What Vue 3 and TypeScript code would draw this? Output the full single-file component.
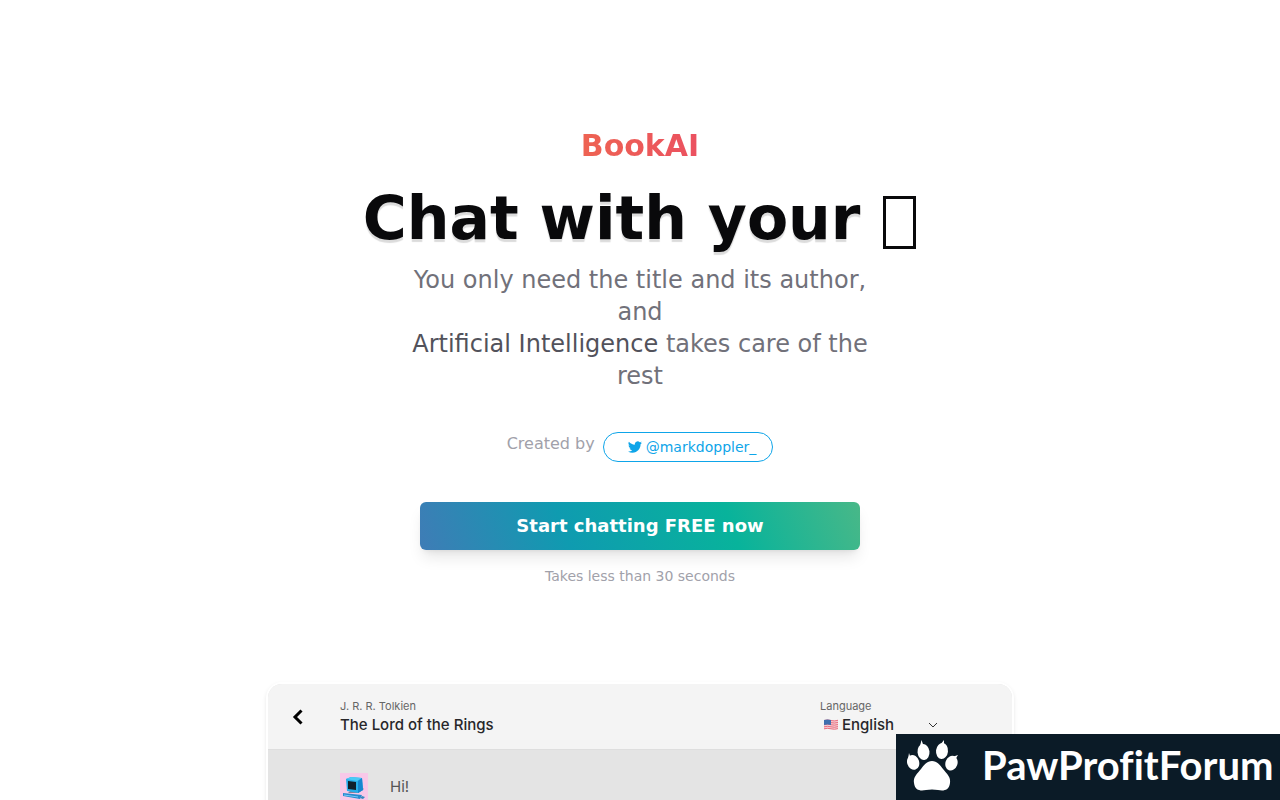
<script setup lang="ts">
import { ref } from 'vue'

const languages: string[] = ['English']
const language = ref<string>('English')
const book = { author: 'J. R. R. Tolkien', title: 'The Lord of the Rings' }
</script>

<template>
  <main class="page">
    <header class="hero">
      <p class="brand">BookAI</p>
      <h1 class="headline">Chat with your <span class="glyph" role="img" aria-label="books"></span></h1>
      <p class="lead">
        You only need the title and its author, and<br />
        <strong>Artificial Intelligence</strong> takes care of the rest
      </p>
      <div class="credit">
        <span>Created by</span>
        <a class="handle" href="#twitter">
          <svg viewBox="0 0 24 24" aria-hidden="true">
            <path d="M23.95 4.57a10 10 0 0 1-2.82.77 4.96 4.96 0 0 0 2.16-2.72c-.95.55-2 .95-3.13 1.18a4.92 4.92 0 0 0-8.38 4.48C7.69 8.1 4.07 6.13 1.64 3.16a4.92 4.92 0 0 0 1.52 6.57 4.9 4.9 0 0 1-2.23-.61v.06a4.92 4.92 0 0 0 3.95 4.83 5 5 0 0 1-2.21.08 4.94 4.94 0 0 0 4.6 3.42A9.87 9.87 0 0 1 0 19.54a13.99 13.99 0 0 0 7.55 2.21c9.05 0 14-7.5 14-13.98 0-.21 0-.42-.02-.63a9.94 9.94 0 0 0 2.46-2.55z" />
          </svg>
          @markdoppler_
        </a>
      </div>
      <button class="start" type="button">Start chatting FREE now</button>
      <p class="hint">Takes less than 30 seconds</p>
    </header>

    <section class="chat">
      <div class="bar">
        <button class="back" type="button" aria-label="Back">
          <svg viewBox="0 0 12 18" aria-hidden="true"><path d="M9.500 2.500 3 9l6.500 6.500" /></svg>
        </button>
        <div class="title">
          <p class="small">{{ book.author }}</p>
          <h2>{{ book.title }}</h2>
        </div>
        <div class="language">
          <label class="small" for="language">Language</label>
          <div class="picker">
            <svg class="flag" viewBox="0 0 14 11" aria-hidden="true">
              <path fill="#f6cdd4" d="M0 1q3.500-1 7 0t7-.2v9q-3.500 1-7 .2t-7 .2z" />
              <path fill="none" stroke="#e8707f" d="M0 1.500q3.500-1 7 0t7-.2M0 3.600q3.500-1 7 0t7-.2M0 5.700q3.500-1 7 0t7-.2M0 7.800q3.500-1 7 0t7-.2M0 9.800q3.500-1 7 0t7-.2" />
              <path fill="#3f6fae" d="M0 1q3.500-1 7 0v5q-3.500-1-7 0z" />
            </svg>
            <select id="language" v-model="language">
              <option v-for="name in languages" :key="name">{{ name }}</option>
            </select>
            <svg class="chevron" viewBox="0 0 10 6" aria-hidden="true"><path d="m1 1 4 4 4-4" /></svg>
          </div>
        </div>
      </div>
      <div class="messages">
        <svg class="avatar" viewBox="0 0 28 28" aria-hidden="true">
          <path fill="#f8c8e8" d="M0 0h28v28H0z" />
          <path fill="#8d7f96" d="m20 13 4 3-6 4H8l2-2z" />
          <path fill="#27aeea" d="m6 6 5-2 11 1 1 12-5 3-11-2z" />
          <path fill="#4bcaf6" d="m6 6 5-2 11 1-5 3z" />
          <path fill="#1687cf" d="m18 8 4-3 1 12-5 3z" />
          <path fill="#10202d" d="m8 8 8 1v8l-8-1z" />
          <path fill="#278bd0" d="m3 20 19 2-2 4-17-3z" />
          <path stroke="#75cafa" d="m4 22 14 2" />
          <path fill="#3489bd" d="m22 23 3 1-2 2-3-1z" />
        </svg>
        <p>Hi!</p>
      </div>
    </section>

    <aside class="banner">
      <svg class="paw" viewBox="0 0 52 51" aria-hidden="true">
        <path d="M26 21c5 0 8 4 11 8 4 5 8 8 7 14-1 8-7 8-12 7q-6-1-12 0c-5 1-11 1-12-7-1-6 3-9 7-14 3-4 6-8 11-8z" />
        <ellipse cx="17.500" cy="12" rx="6" ry="8" transform="rotate(-6 17 12)" />
        <ellipse cx="36" cy="11" rx="6" ry="8" transform="rotate(6 36 11)" />
        <ellipse cx="7" cy="22.500" rx="6" ry="7.500" transform="rotate(-18 7 22)" />
        <ellipse cx="45.500" cy="23" rx="6" ry="7.500" transform="rotate(20 45 23)" />
        <path d="m14 6 1.500-6L18 7zM34 5l4-5v7zM2 19l1-6 2 6zM46 17l6-2-3 5z" />
      </svg>
      <span>PawProfitForum</span>
    </aside>
  </main>
</template>

<style>
body {
  margin: 0;
  background: #fff;
}
html {
  scrollbar-width: none;
}
</style>

<style scoped>
.page {
  height: 100vh;
  overflow: hidden;
  font-family: "DejaVu Sans", sans-serif;
  color: #09090b;
}
.page p,
h1,
h2 {
  margin: 0;
}
.hero {
  display: flex;
  flex-direction: column;
  align-items: center;
  padding: 128px 24px 98px;
  text-align: center;
}
.brand {
  font-size: 30px;
  line-height: 36px;
  font-weight: 700;
  color: transparent;
  background: linear-gradient(90deg, #ee6352, #eb5160);
  background-clip: text;
}
.headline {
  padding-top: 24px;
  font-size: 60px;
  line-height: 60px;
  font-weight: 700;
  text-shadow: 0 3px 1px rgba(0, 0, 0, 0.14);
}
.glyph {
  display: inline-block;
  box-sizing: border-box;
  width: 33px;
  height: 53px;
  margin: 0 1px 0 2px;
  border: 3px solid #09090b;
  vertical-align: -10px;
}
.lead {
  width: 480px;
  max-width: 100%;
  padding-top: 15px;
  font-size: 24px;
  line-height: 32px;
  color: #71717a;
}
.lead strong {
  font-weight: 400;
  color: #52525b;
}
.credit {
  display: flex;
  gap: 8px;
  margin-top: 40px;
  font-size: 16px;
  line-height: 24px;
  color: #a1a1aa;
}
.handle {
  display: flex;
  align-items: center;
  gap: 4px;
  padding: 4px 16px 4px 24px;
  border: 1px solid #0ea5e9;
  border-radius: 16px;
  font-size: 14px;
  line-height: 20px;
  color: #0ea5e9;
  text-decoration: none;
}
.handle svg {
  width: 14px;
  height: 14px;
  fill: currentColor;
}
.start {
  width: 440px;
  max-width: 100%;
  height: 48px;
  margin-top: 40px;
  border: 0;
  border-radius: 6px;
  font: 700 18px/28px "DejaVu Sans", sans-serif;
  color: #fff;
  background: linear-gradient(70deg, #3f7cb6 0%, #0f9bb0 33%, #08b39b 70%, #48b888 100%);
  box-shadow: 0 10px 15px -3px rgba(0, 0, 0, 0.1), 0 4px 6px -4px rgba(0, 0, 0, 0.1);
}
.page .hint {
  margin-top: 16px;
  font-size: 14px;
  line-height: 20px;
  color: #a1a1aa;
}
.chat {
  width: 744px;
  max-width: calc(100% - 48px);
  margin: 0 auto;
  border-radius: 14px 14px 0 0;
  overflow: hidden;
  font-family: Inter, sans-serif;
  color: #27272a;
  background: #e4e4e4;
  box-shadow: 0 0 0 2px #fff, 0 2px 5px 1px rgba(0, 0, 0, 0.14);
}
.bar {
  display: flex;
  align-items: center;
  height: 65px;
  padding-left: 24px;
  border-bottom: 1px solid #dedede;
  background: #f4f4f4;
}
.back {
  width: 12px;
  height: 18px;
  padding: 0;
  border: 0;
  background: none;
}
.back svg {
  display: block;
  fill: none;
  stroke: #000;
  stroke-width: 3;
}
.title {
  flex: 1;
  padding-left: 36px;
}
.small {
  display: block;
  font-size: 11px;
  line-height: 16px;
  color: #666;
}
.title h2 {
  font-size: 15px;
  line-height: 22px;
  font-weight: 500;
}
.language {
  width: 192px;
}
.picker {
  display: flex;
  align-items: center;
  width: 114px;
  height: 22px;
  padding-left: 4px;
}
.flag {
  width: 14px;
  height: 11px;
  margin-right: 4px;
}
.picker select {
  flex: 1;
  padding: 0;
  border: 0;
  appearance: none;
  font: 500 15px/22px Inter, sans-serif;
  color: #27272a;
  background: none;
}
.chevron {
  width: 10px;
  height: 6px;
  fill: none;
  stroke: #333;
}
.messages {
  display: flex;
  gap: 22px;
  min-height: 80px;
  padding: 23px 72px;
  font-size: 15px;
  line-height: 28px;
  color: #555;
}
.avatar {
  width: 28px;
  height: 28px;
}
.banner {
  position: fixed;
  right: 0;
  bottom: 0;
  display: flex;
  align-items: center;
  box-sizing: border-box;
  width: 384px;
  height: 66px;
  padding: 0 0 4px 10px;
  gap: 24px;
  font-family: Lato, sans-serif;
  font-size: 40px;
  line-height: 48px;
  font-weight: 700;
  font-variant-ligatures: none;
  color: #fff;
  background: #0b1b27;
}
.paw {
  flex: none;
  width: 52px;
  height: 51px;
  fill: #fff;
}
</style>
